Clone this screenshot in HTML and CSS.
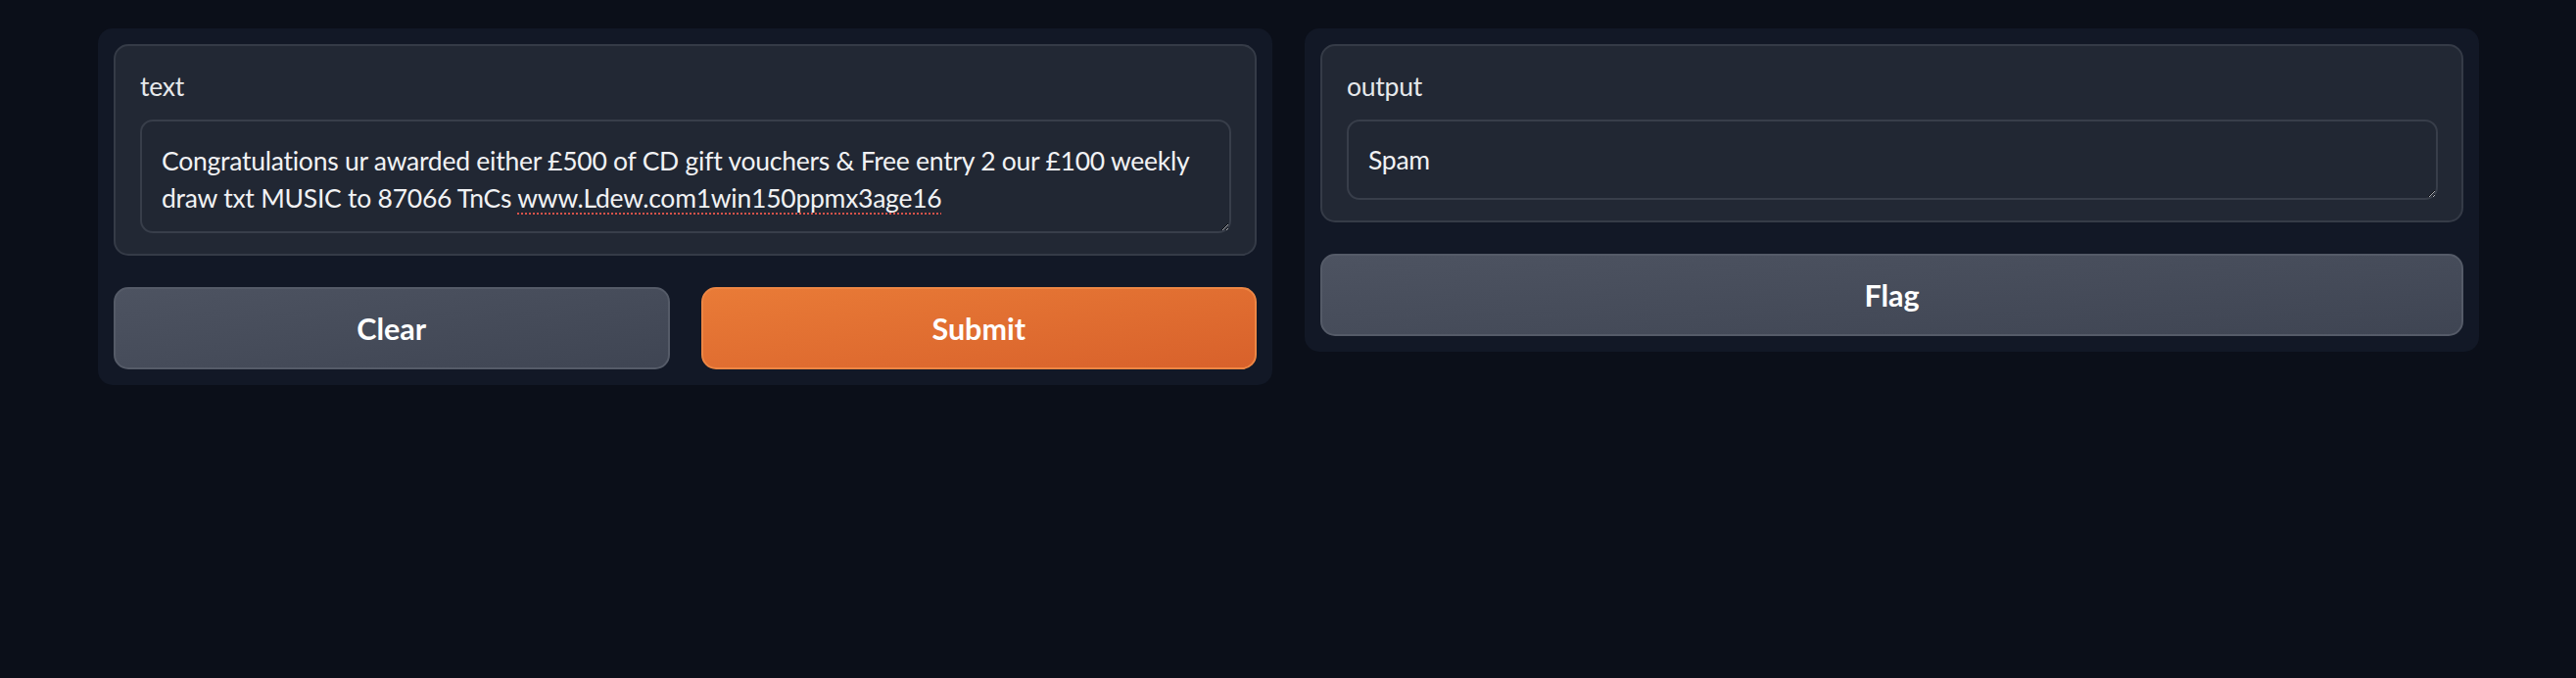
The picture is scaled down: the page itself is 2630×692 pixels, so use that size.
FILE: index.html
```html
<!DOCTYPE html>
<html lang="en">
<head>
<meta charset="utf-8">
<title>Spam classifier</title>
<link rel="stylesheet" href="styles.css">
</head>
<body>
<main class="app">
  <section class="panel">
    <div class="block">
      <label class="block-label">text</label>
      <div class="textbox textbox-input" role="textbox">Congratulations ur awarded either £500 of CD gift vouchers &amp; Free entry 2 our £100 weekly draw txt MUSIC to 87066 TnCs <span class="misspelled">www.Ldew.com1win150ppmx3age16</span></div>
    </div>
    <div class="button-row">
      <button class="btn btn-secondary">Clear</button>
      <button class="btn btn-primary">Submit</button>
    </div>
  </section>
  <section class="panel">
    <div class="block">
      <label class="block-label">output</label>
      <div class="textbox textbox-output" role="textbox">Spam</div>
    </div>
    <div class="button-row">
      <button class="btn btn-secondary">Flag</button>
    </div>
  </section>
</main>
</body>
</html>
```
FILE: styles.css
```css
html {
  color-scheme: dark;
}

body {
  margin: 0;
  background: #0b0f19;
  color: #eceef1;
  font-family: Lato, "Open Sans", sans-serif;
  font-size: 26.5px;
  letter-spacing: -0.25px;
}

.app {
  display: flex;
  align-items: flex-start;
  gap: 33px;
  padding: 29px 99px 0 100px;
}

.panel {
  flex: 1 1 0;
  min-width: 0;
  display: flex;
  flex-direction: column;
  gap: 32px;
  padding: 16px;
  background: #121826;
  border-radius: 15px;
}

.block {
  display: flex;
  flex-direction: column;
  gap: 15px;
  padding: 22px 24px 21px 25px;
  background: #222834;
  border: 2px solid #353b47;
  border-radius: 15px;
}

.block-label {
  display: block;
  line-height: 38px;
  color: #e6e8eb;
}

.textbox {
  box-sizing: border-box;
  padding: 20px 20px;
  line-height: 38px;
  background: #212733;
  border: 2px solid #383e4a;
  border-radius: 13px;
  color: #f1f2f4;
  resize: vertical;
  overflow: hidden;
}

.textbox-input {
  height: 116px;
  padding-top: 21px;
}

.textbox-output {
  height: 82px;
}

.misspelled {
  text-decoration: underline dotted #d9534a;
  text-decoration-thickness: 2px;
  text-underline-offset: 5px;
}

.button-row {
  display: flex;
  gap: 32px;
}

.btn {
  flex: 1 1 0;
  height: 84px;
  border-radius: 15px;
  font-family: Lato, "Open Sans", sans-serif;
  font-size: 30.5px;
  font-weight: 700;
  letter-spacing: 0;
  color: #ffffff;
  cursor: pointer;
}

.btn-secondary {
  background: linear-gradient(to bottom right, #4d5361, #3f4553);
  border: 2px solid #555b68;
}

.btn-primary {
  background: linear-gradient(to bottom right, #e97b37, #d8612b);
  border: 2px solid #ed8644;
}
```
